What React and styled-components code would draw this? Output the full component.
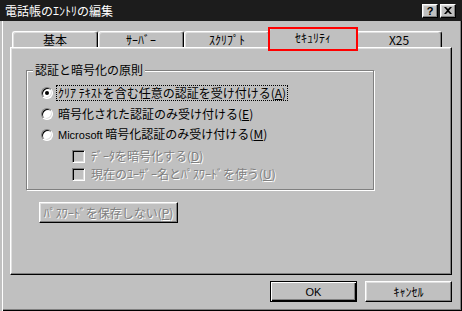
import React from 'react';
import styled, { createGlobalStyle, css } from 'styled-components';

const GlobalStyle = createGlobalStyle`
  html, body {
    margin: 0;
    padding: 0;
    background: #c0c0c0;
  }
  body {
    font-family: "Noto Sans CJK JP", "Noto Sans", sans-serif;
    font-size: 12px;
  }
`;

const Window = styled.div`
  width: 462px;
  height: 311px;
  display: flex;
  flex-direction: column;
  background: #c0c0c0;
  overflow: hidden;
`;

const TitleBar = styled.div`
  height: 21px;
  flex: none;
  background: #1c1c1c;
  color: #fff;
  display: flex;
  align-items: center;
  padding: 0 6px 0 5px;
  line-height: 14px;
`;

const TitleText = styled.span`
  flex: 1;
`;

const TitleButtons = styled.div`
  display: flex;
  gap: 2px;
`;

const CaptionButton = styled.div`
  box-sizing: border-box;
  width: 16px;
  height: 14px;
  background: #c0c0c0;
  border: 1px solid;
  border-color: #fff #000 #000 #fff;
  box-shadow: inset -1px -1px 0 #808080, inset 1px 1px 0 #dfdfdf;
  display: flex;
  align-items: center;
  justify-content: center;
  font: bold 11px "Liberation Sans", sans-serif;
  color: #000;
`;

const Body = styled.div`
  flex: 1;
  display: flex;
  flex-direction: column;
  padding: 6px 10px 0 10px;
  box-shadow: inset 2px 0 0 #c0c0c0, inset 3px 0 0 #fff, inset -1px -1px 0 #000,
    inset -2px -2px 0 #808080;
`;

const TabStrip = styled.div`
  display: flex;
  align-items: flex-end;
  height: 20px;
  padding-left: 2px;
`;

const Tab = styled.div`
  box-sizing: border-box;
  width: 86px;
  height: 16px;
  border: 1px solid;
  border-bottom: none;
  border-color: #fff #000 #000 #fff;
  border-radius: 3px 3px 0 0;
  box-shadow: inset -1px 0 0 #808080, inset 1px 1px 0 #dfdfdf;
  display: flex;
  align-items: center;
  justify-content: center;
  line-height: 14px;
  color: #000;

  ${(p) =>
    p.$active &&
    css`
      width: 90px;
      height: 22px;
      margin: 0 -2px -2px;
      position: relative;
      z-index: 1;
      align-items: flex-start;
      padding-top: 3px;
      background: #c0c0c0;

      &::after {
        content: '';
        position: absolute;
        left: -1px;
        top: -1px;
        right: -1px;
        bottom: -2px;
        border: 2px solid #ff0000;
      }
    `}
`;

const Panel = styled.div`
  box-sizing: border-box;
  height: 228px;
  border: 1px solid;
  border-color: #fff #000 #000 #fff;
  box-shadow: inset -1px -1px 0 #808080, inset 1px 1px 0 #dfdfdf;
  padding: 22px 0 0 15px;
  display: flex;
  flex-direction: column;
  align-items: flex-start;
`;

const GroupBox = styled.div`
  position: relative;
  box-sizing: border-box;
  width: 348px;
  height: 120px;
  border: 1px solid #808080;
  box-shadow: 1px 1px 0 #fff, inset 1px 1px 0 #fff;
  padding: 11px 0 0 14px;
  display: flex;
  flex-direction: column;
`;

const GroupLabel = styled.span`
  position: absolute;
  top: -9px;
  left: 6px;
  padding: 0 2px;
  background: #c0c0c0;
  line-height: 16px;
  color: #000;
`;

const OptionRow = styled.div`
  display: flex;
  align-items: center;
  height: 21px;
  gap: 3px;

  ${(p) =>
    p.$sub &&
    css`
      height: 18px;
      gap: 4px;
      margin-left: 31px;
    `}
  ${(p) => p.$first && css`margin-top: 2px;`}
`;

const Radio = styled.span`
  box-sizing: border-box;
  flex: none;
  width: 12px;
  height: 12px;
  border-radius: 50%;
  background: #fff;
  border: 1px solid;
  border-color: #808080 #fff #fff #808080;
  box-shadow: inset 1px 1px 0 #000, inset -1px -1px 0 #dfdfdf;
  display: flex;
  align-items: center;
  justify-content: center;

  &::after {
    content: '';
    width: 4px;
    height: 4px;
    border-radius: 50%;
    background: #000;
    display: ${(p) => (p.$checked ? 'block' : 'none')};
  }
`;

const Checkbox = styled.span`
  box-sizing: border-box;
  flex: none;
  width: 13px;
  height: 13px;
  background: #c0c0c0;
  border: 1px solid;
  border-color: #808080 #fff #fff #808080;
  box-shadow: inset 1px 1px 0 #000, inset -1px -1px 0 #dfdfdf;
`;

const disabledText = css`
  color: #808080;
  text-shadow: 1px 1px 0 #fff;
`;

const OptionText = styled.span`
  line-height: 14px;
  padding: 0 1px;
  border: 1px ${(p) => (p.$focus ? 'dotted #000' : 'solid transparent')};
  color: #000;
  white-space: nowrap;
  ${(p) => p.$disabled && disabledText}
`;

const Latin = styled.span`
  font-family: "Liberation Sans", sans-serif;
  font-size: 11px;
`;

const Key = styled.u`
  text-underline-offset: 1px;
`;

const Button = styled.div`
  box-sizing: border-box;
  width: ${(p) => p.$w}px;
  height: 21px;
  background: #c0c0c0;
  border: 1px solid;
  border-color: #fff #000 #000 #fff;
  box-shadow: inset -1px -1px 0 #808080, inset 1px 1px 0 #dfdfdf;
  display: flex;
  align-items: center;
  justify-content: center;
  line-height: 14px;
  color: #000;
  white-space: nowrap;

  ${(p) =>
    p.$default &&
    css`
      border-color: #000;
      box-shadow: inset 1px 1px 0 #fff, inset -1px -1px 0 #000,
        inset -2px -2px 0 #808080;
    `}
  ${(p) => p.$disabled && disabledText}
`;

const SavePasswordButton = styled(Button)`
  margin: 12px 0 0 13px;
`;

const Footer = styled.div`
  display: flex;
  justify-content: flex-end;
  gap: 8px;
  margin-top: 6px;
`;

const CloseGlyph = () => (
  <svg width="8" height="7" viewBox="0 0 8 7">
    <path d="M0 0h2l2 2 2-2h2L5 3.5 8 7H6L4 5 2 7H0l3-3.5z" fill="#000" />
  </svg>
);

const tabs = ['基本', 'ｻｰﾊﾞｰ', 'ｽｸﾘﾌﾟﾄ', 'ｾｷｭﾘﾃｨ', 'X25'];

export default function App() {
  return (
    <>
      <GlobalStyle />
      <Window>
        <TitleBar>
          <TitleText>電話帳のｴﾝﾄﾘの編集</TitleText>
          <TitleButtons>
            <CaptionButton>?</CaptionButton>
            <CaptionButton>
              <CloseGlyph />
            </CaptionButton>
          </TitleButtons>
        </TitleBar>
        <Body>
          <TabStrip>
            {tabs.map((t) => (
              <Tab key={t} $active={t === 'ｾｷｭﾘﾃｨ'}>
                {t}
              </Tab>
            ))}
          </TabStrip>
          <Panel>
            <GroupBox>
              <GroupLabel>認証と暗号化の原則</GroupLabel>
              <OptionRow>
                <Radio $checked />
                <OptionText $focus>
                  ｸﾘｱ ﾃｷｽﾄを含む任意の認証を受け付ける(<Key>A</Key>)
                </OptionText>
              </OptionRow>
              <OptionRow>
                <Radio />
                <OptionText>
                  暗号化された認証のみ受け付ける(<Key>E</Key>)
                </OptionText>
              </OptionRow>
              <OptionRow>
                <Radio />
                <OptionText>
                  <Latin>Microsoft</Latin> 暗号化認証のみ受け付ける(<Key>M</Key>)
                </OptionText>
              </OptionRow>
              <OptionRow $sub $first>
                <Checkbox />
                <OptionText $disabled>
                  ﾃﾞｰﾀを暗号化する(<Key>D</Key>)
                </OptionText>
              </OptionRow>
              <OptionRow $sub>
                <Checkbox />
                <OptionText $disabled>
                  現在のﾕｰｻﾞｰ名とﾊﾟｽﾜｰﾄﾞを使う(<Key>U</Key>)
                </OptionText>
              </OptionRow>
            </GroupBox>
            <SavePasswordButton $w={139} $disabled>
              ﾊﾟｽﾜｰﾄﾞを保存しない(<Key>P</Key>)
            </SavePasswordButton>
          </Panel>
          <Footer>
            <Button $w={87} $default>
              <Latin>OK</Latin>
            </Button>
            <Button $w={87}>ｷｬﾝｾﾙ</Button>
          </Footer>
        </Body>
      </Window>
    </>
  );
}
